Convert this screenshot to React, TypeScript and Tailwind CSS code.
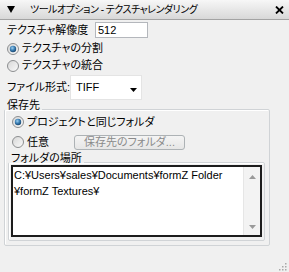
import { FC } from 'react';

const Radio: FC<{ checked?: boolean }> = ({ checked }) => (
  <svg width="12" height="12" viewBox="0 0 12 12" className="shrink-0">
    <defs>
      <linearGradient id="rb" x1="0" y1="0" x2="1" y2="1">
        <stop offset="0" stopColor="#d6d6d6" />
        <stop offset="1" stopColor="#fbfbfb" />
      </linearGradient>
      <radialGradient id="rd" cx="0.4" cy="0.35" r="0.7">
        <stop offset="0" stopColor="#9fd0f0" />
        <stop offset="0.5" stopColor="#3b7fb5" />
        <stop offset="1" stopColor="#143f66" />
      </radialGradient>
    </defs>
    <circle cx="6" cy="6" r="5.5" fill="url(#rb)" stroke="#8c8e90" />
    {checked && <circle cx="6" cy="6" r="3.2" fill="url(#rd)" />}
  </svg>
);

const Arrow: FC<{ up?: boolean; color?: string }> = ({ up, color = '#000' }) => (
  <svg width="7" height="4" viewBox="0 0 7 4">
    <polygon points={up ? '3.5,0 7,4 0,4' : '0,0 7,0 3.5,4'} fill={color} />
  </svg>
);

export default function App() {
  return (
    <div className="w-[289px] h-[272px] bg-[#f0f0f0] text-[11px] text-black font-['Liberation_Sans','Noto_Sans_CJK_JP',sans-serif] [font-feature-settings:'palt'] whitespace-nowrap overflow-hidden">
      {/* title bar */}
      <div className="h-[20px] flex items-center bg-gradient-to-b from-[#f7f7f7] to-[#d8d8d8] border-b border-[#a3a3a3]">
        <svg width="8" height="7" viewBox="0 0 8 7" className="ml-[7px] shrink-0">
          <polygon points="0,0 8,0 4,7" fill="#000" />
        </svg>
        <span className="ml-[15px] flex-1 text-[10px] tracking-[-0.5px] leading-[19px]">ツールオプション - テクスチャレンダリング</span>
        <svg width="9" height="8" viewBox="0 0 9 8" className="mr-[5px] shrink-0">
          <path d="M1 0.5 L8 7.5 M8 0.5 L1 7.5" stroke="#000" strokeWidth="1.8" />
        </svg>
      </div>

      <div className="pl-[7px]">
        <div className="mt-[2px] h-[16px] flex items-center">
          <span className="w-[88px] shrink-0">テクスチャ解像度</span>
          <div className="w-[53px] h-[16px] bg-white border border-[#b4b7bc] pl-[2px] leading-[14px]">512</div>
        </div>

        <div className="mt-[2px] h-[17px] flex items-center gap-[3px]">
          <Radio checked />
          <span>テクスチャの分割</span>
        </div>
        <div className="h-[17px] flex items-center gap-[3px]">
          <Radio />
          <span>テクスチャの統合</span>
        </div>

        <div className="mt-[1px] h-[25px] flex items-center">
          <span className="w-[63px] shrink-0">ファイル形式:</span>
          <div className="w-[72px] h-[25px] bg-white border border-[#e4e4e4] flex items-center pl-[5px] pr-[4px]">
            <span className="flex-1">TIFF</span>
            <div className="mt-[4px]">
              <Arrow />
            </div>
          </div>
        </div>

        <fieldset className="-ml-[3px] w-[266px] border border-[#d0d3d6] rounded-[2px] shadow-[inset_1px_1px_0_#fff] pb-[4px]">
          <legend className="px-[2px] leading-[10px] pb-[8px]">保存先</legend>
          <div className="px-[7px]">
            <div className="-mt-[4px] h-[16px] flex items-center gap-[3px]">
              <Radio checked />
              <span>プロジェクトと同じフォルダ</span>
            </div>
            <div className="mt-[4px] h-[16px] flex items-center">
              <div className="w-[62px] shrink-0 flex items-center gap-[3px]">
                <Radio />
                <span>任意</span>
              </div>
              <div className="w-[111px] h-[15px] rounded-[3px] border border-[#adb2b5] bg-gradient-to-b from-[#f4f4f4] to-[#e6e6e6] text-[#8a8a8a] flex items-center justify-center leading-[13px]">
                保存先のフォルダ...
              </div>
            </div>
          </div>

          <fieldset className="mt-[3px] ml-[3px] w-[257px] border border-[#d0d3d6] rounded-[2px] shadow-[inset_1px_1px_0_#fff] pb-[3px]">
            <legend className="px-[2px] leading-[10px] pb-[8px]">フォルダの場所</legend>
            <div className="-mt-[6px] mx-[2px] h-[72px] bg-white border-2 border-[#1c1c1c] flex">
              <div className="flex-1 pl-[1px] leading-[16px]">
                <div>C:¥Users¥sales¥Documents¥formZ Folder</div>
                <div>¥formZ Textures¥</div>
              </div>
              <div className="w-[17px] bg-[#f3f3f3] border-l border-[#e6e6e6] flex flex-col items-center justify-between pt-[8px] pb-[6px]">
                <Arrow up color="#9a9a9a" />
                <Arrow color="#9a9a9a" />
              </div>
            </div>
          </fieldset>
        </fieldset>

        <div className="mt-[16px] flex justify-end pr-[2px]">
          <svg width="9" height="9" viewBox="0 0 9 9">
            {[
              [7, 1], [7, 4], [4, 4], [7, 7], [4, 7], [1, 7],
            ].map(([x, y]) => (
              <rect key={`${x}-${y}`} x={x} y={y} width="1.5" height="1.5" fill="#a8a8a8" />
            ))}
          </svg>
        </div>
      </div>
    </div>
  );
}
